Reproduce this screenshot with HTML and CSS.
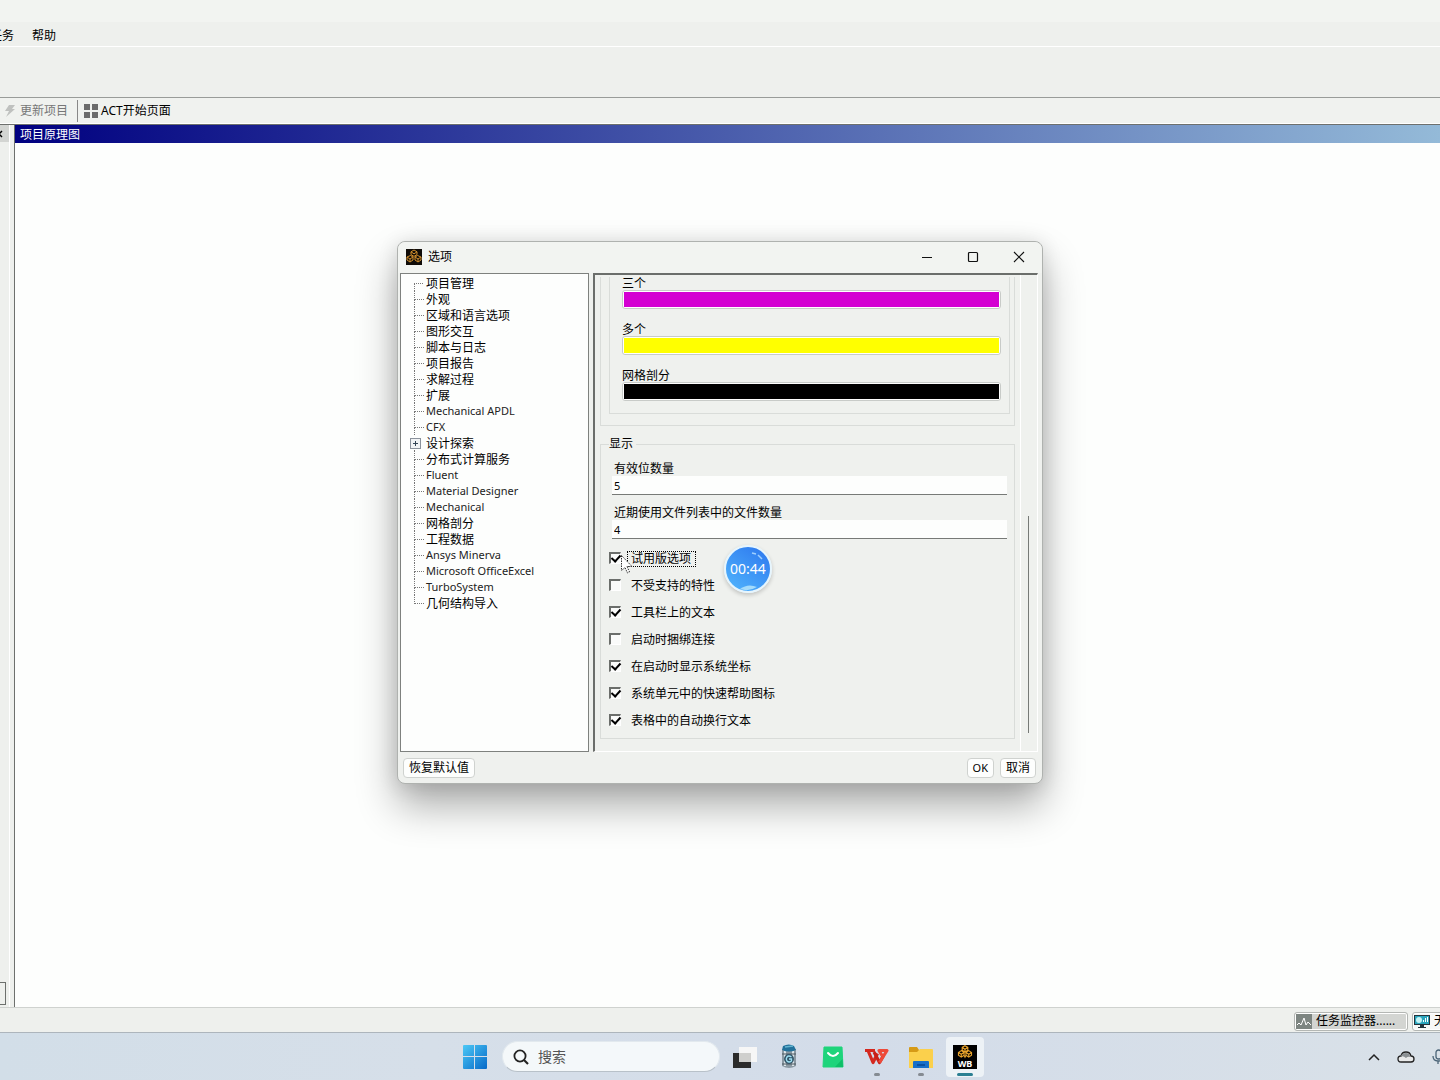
FILE: index.html
```html
<!DOCTYPE html>
<html lang="zh-CN">
<head>
<meta charset="utf-8">
<title>选项</title>
<link rel="stylesheet" href="styles.css">
</head>
<body>
<div class="screen">
  <div class="titlestrip"></div>
  <nav class="menubar"><a href="#" class="menu-cut">任务</a><a href="#">帮助</a></nav>
  <div class="toolbar-empty"></div>
  <div class="toolbar">
    <button class="tool tool-off" disabled>
      <svg width="12" height="14" viewBox="0 0 12 14"><path d="M5 1h6L8 5h3L2 13l3-6H1z" fill="#bfc1bf"/></svg>更新项目
    </button>
    <button class="tool">
      <svg width="14" height="14" viewBox="0 0 14 14" fill="#6b6b6b"><path d="M0 0h6v6H0zM8 0h6v6H8zM0 8h6v6H0zM8 8h6v6H8z"/></svg>ACT开始页面
    </button>
  </div>
  <main class="work">
    <aside class="side">
      <div class="side-head"><svg width="4" height="8" viewBox="0 0 4 8"><path d="M-4 1l6 6M2 1l-6 6" stroke="#000" stroke-width="1.5"/></svg></div>
      <div class="side-box"></div>
    </aside>
    <section class="schematic"><h1>项目原理图</h1></section>
  </main>
  <footer class="status">
    <button class="status-btn">
      <svg width="16" height="15" viewBox="0 0 16 15"><path d="M0 0h16v15H0z" fill="#7d8581"/><path d="M1 11l2-2 2 2 3-7 2 7 2-3 3 3" fill="none" stroke="#fff"/></svg>任务监控器......
    </button>
    <button class="status-btn status-cut">
      <svg width="16" height="15" viewBox="0 0 16 15"><path d="M0 1h16v10H0z" fill="#24343c"/><path d="M1 2h14v8H1z" fill="#2aa5bd"/><circle cx="5" cy="6" r="3" fill="#c5f3f5"/><path d="M9 8V6h1v2zm2 0V4h1v4zm2 0V3h1v5z" fill="#fff"/><path d="M6 11h4v2h2v1H4v-1h2z" fill="#24343c"/></svg>无
    </button>
  </footer>
  <div class="taskbar">
    <div></div>
    <div class="apps">
      <button class="app" aria-label="开始"><svg width="24" height="24" viewBox="0 0 24 24"><defs><linearGradient id="win" x1="0" y1="0" x2="1" y2="1"><stop offset="0" stop-color="#4cc8f6"/><stop offset="1" stop-color="#0669c8"/></linearGradient></defs><path d="M0 1q0-1 1-1h10v11H0zM12 0h11q1 0 1 1v10H12zM0 12h11v12H1q-1 0-1-1zM12 12h12v11q0 1-1 1H12z" fill="url(#win)"/></svg></button>
      <label class="search"><svg width="16" height="16" viewBox="0 0 16 16" fill="none" stroke="#222" stroke-width="1.8"><circle cx="7" cy="7" r="5.6"/><path d="M11 11l4 4" stroke-width="2.2"/></svg><input type="text" placeholder="搜索" aria-label="搜索"></label>
      <button class="app" aria-label="任务视图"><svg width="26" height="24" viewBox="0 0 26 24"><path d="M1 8h18v15H1z" fill="#2b2b2b"/><path d="M7 2h18v15H7z" fill="#f6f6f6"/><path d="M7 8h12v9H7z" fill="#cfcfcd"/></svg></button>
      <button class="app" aria-label="清理"><svg width="18" height="26" viewBox="0 0 18 26"><path d="M2 5h14v17q-7 4-14 0z" fill="#8b99a3"/><path d="M4 7h2v15H4zM12 7h2v15h-2z" fill="#dde5e9"/><path d="M2 10h14M2 20h14" stroke="#4c5961"/><path d="M3 2q6-3 11 0l2 4q-7 3-14 0z" fill="#22719b"/><path d="M5 3l8-1" stroke="#65b5d1" stroke-width="1.5"/><circle cx="9" cy="15" r="5" fill="#34566a"/><path d="M11.500 13q-3-2-4.500 0t0 4q2 2 4.500 0v-2H9" fill="none" stroke="#9de0f3" stroke-width="1.3"/></svg></button>
      <button class="app" aria-label="应用商店"><svg width="22" height="22" viewBox="0 0 22 22"><path d="M2 1h18l1 20H1z" fill="#1ed47b" stroke="#1ed47b" stroke-linejoin="round"/><path d="M13 21h8l-.5-8z" fill="#0fbf68"/><path d="M6 7q5 6 10 0" fill="none" stroke="#fff" stroke-width="2" stroke-linecap="round"/></svg></button>
      <button class="app running" aria-label="WPS"><svg width="24" height="18" viewBox="0 0 24 18" fill="none" stroke-width="3.200" stroke-linejoin="round"><path d="M0 2.500h10M3 2.500l5 12 4.500-9" stroke="#d4281f"/><path d="M9 4l5.500 10.500 4-7" stroke="#c81f18"/><path d="M14.500 14.500l7.500-12h-8l3 5" stroke="#ee4a39"/></svg></button>
      <button class="app running" aria-label="文件资源管理器"><svg width="24" height="22" viewBox="0 0 24 22"><path d="M0 2q0-1 1-1h7l2 3h13q1 0 1 1v17H0z" fill="#d69a16"/><path d="M0 6h8l3-3h12q1 0 1 1v18H0z" fill="#fbd04c"/><path d="M4 22v-6q0-1 1-1h14q1 0 1 1v6z" fill="#176fca"/><path d="M8 19h8" stroke="#0a50a1" stroke-width="2"/></svg></button>
      <button class="app active" aria-label="Workbench">
        <span class="wb"><svg width="16" height="14" viewBox="0 0 16 15" fill="none" stroke="#e8a32b" stroke-width="1.200"><path d="M8 .8l3 1.800v3L8 7.400 5 5.600v-3zM4 6l3 2v3l-3 2-3-2V8zM12 6l3 2v3l-3 2-3-2V8zM5 2.600l3 2 3-2M1 8l3 2 3-2M9 8l3 2 3-2M8 4v4M4 10v3M12 10v3M7 11l1 2 1-2"/></svg><b>WB</b></span>
      </button>
    </div>
    <div class="tray">
      <button class="tray-btn" aria-label="显示隐藏的图标"><svg width="12" height="8" viewBox="0 0 12 8"><path d="M1 7l5-5 5 5" fill="none" stroke="#222" stroke-width="1.500"/></svg></button>
      <button class="tray-btn" aria-label="OneDrive"><svg width="18" height="12" viewBox="0 0 18 12"><path d="M4 11q-3 0-3-3t3-3q1-4 5-4t5 4q3 0 3 3t-3 3z" fill="#e9eaea" stroke="#222" stroke-width="1.300"/><path d="M4 5q1-3 5-3t4 4q-2-1-4 1Q6 4 3 6z" fill="#8b9093"/></svg></button>
      <button class="tray-btn" aria-label="麦克风"><svg width="12" height="16" viewBox="0 0 12 16" fill="none" stroke="#4b6477" stroke-width="1.300"><rect x="4" y="1" width="5" height="9" rx="2.500"/><path d="M1 7q0 5 5 5t5-5M6 12v3"/></svg></button>
    </div>
  </div>

  <div class="dialog" role="dialog" aria-label="选项">
    <header class="dlg-head">
      <span class="logo"><svg width="16" height="15" viewBox="0 0 16 15" fill="none" stroke="#d08e2c" stroke-width="1"><path d="M8 1l3 1.800v2.800L8 7.400 5 5.600V2.800zM4.500 6.500L7 8v3l-3 2-3-2V8zM11.500 6.500L15 8v3l-3 2-3-2V8zM5 2.800l3 2 3-2M1 8l3 2 3-2M9 8l3 2 3-2M4 10v3M12 10v3"/></svg></span>
      <h2>选项</h2>
      <div class="winbtns">
        <button aria-label="最小化"><svg width="12" height="12" viewBox="0 0 12 12"><path d="M1 6.500h10" stroke="#111"/></svg></button>
        <button aria-label="最大化"><svg width="12" height="12" viewBox="0 0 12 12"><rect x="1.500" y="1.500" width="9" height="9" rx="1" fill="none" stroke="#111" stroke-width="1.200"/></svg></button>
        <button aria-label="关闭"><svg width="12" height="12" viewBox="0 0 12 12"><path d="M1 1l10 10M11 1L1 11" stroke="#111" stroke-width="1.100"/></svg></button>
      </div>
    </header>
    <div class="dlg-body">
      <ul class="tree">
        <li>项目管理</li><li>外观</li><li>区域和语言选项</li><li>图形交互</li><li>脚本与日志</li><li>项目报告</li><li>求解过程</li><li>扩展</li>
        <li class="en">Mechanical APDL</li><li class="en">CFX</li>
        <li class="branch">设计探索</li><li>分布式计算服务</li>
        <li class="en">Fluent</li><li class="en">Material Designer</li><li class="en">Mechanical</li>
        <li>网格剖分</li><li>工程数据</li>
        <li class="en">Ansys Minerva</li><li class="en">Microsoft OfficeExcel</li><li class="en">TurboSystem</li>
        <li>几何结构导入</li>
      </ul>
      <div class="panel">
        <div class="pane">
          <div class="outer"><div class="inner">
            <div class="swatch-row"><span id="c3">三个</span><button class="swatch" aria-labelledby="c3"><i class="magenta"></i></button></div>
            <div class="swatch-row"><span id="cm">多个</span><button class="swatch" aria-labelledby="cm"><i class="yellow"></i></button></div>
            <div class="swatch-row"><span id="cg">网格剖分</span><button class="swatch" aria-labelledby="cg"><i class="black"></i></button></div>
          </div></div>
          <fieldset class="display">
            <legend>显示</legend>
            <div class="field"><label for="digits">有效位数量</label><input id="digits" type="text" value="5"></div>
            <div class="field"><label for="recent">近期使用文件列表中的文件数量</label><input id="recent" type="text" value="4"></div>
            <div class="checks">
              <label><input type="checkbox" checked><span class="focus">试用版选项</span></label>
              <label><input type="checkbox"><span>不受支持的特性</span></label>
              <label><input type="checkbox" checked><span>工具栏上的文本</span></label>
              <label><input type="checkbox"><span>启动时捆绑连接</span></label>
              <label><input type="checkbox" checked><span>在启动时显示系统坐标</span></label>
              <label><input type="checkbox" checked><span>系统单元中的快速帮助图标</span></label>
              <label><input type="checkbox" checked><span>表格中的自动换行文本</span></label>
            </div>
          </fieldset>
        </div>
        <div class="scroll"><div class="thumb"></div></div>
      </div>
    </div>
    <footer class="dlg-foot">
      <button class="btn">恢复默认值</button>
      <button class="btn btn-ok">OK</button>
      <button class="btn">取消</button>
    </footer>
    <div class="timer">
      <svg class="shine" width="44" height="44" viewBox="0 0 44 44" fill="none"><path d="M14 42q8-6 17-2-8 5-17 2z" fill="#a5dcfb"/><path d="M26 6l4 1M32 8l4 4" stroke="#9fd0ff" stroke-width="1.500"/></svg>
      <span>00:44</span>
    </div>
    <svg class="cursor" width="12" height="19" viewBox="0 0 12 19"><path d="M.5.5v15l3.500-3 2.500 5.500 2-1L6 11.500h5z" fill="#fff" stroke="#333" stroke-dasharray="1.500 1"/></svg>
  </div>
</div>
</body>
</html>
```
FILE: styles.css
```css
* { box-sizing: border-box; }
body { margin: 0; background: #fdfefd; color: #000; font: 12px/16px "Noto Sans", "Noto Sans CJK SC", sans-serif; }
button, input { font: inherit; color: inherit; }
button { border: 0; padding: 0; background: none; }
h1, h2, ul { margin: 0; padding: 0; font: inherit; }
svg { display: block; flex: none; overflow: visible; }

.screen { position: relative; display: flex; flex-direction: column; min-height: 100vh; overflow: hidden; }
.titlestrip { height: 22px; background: #f2f4f1; }
.menubar { display: flex; gap: 18px; height: 25px; padding-top: 6px; background: #eef0ed; border-bottom: 1px solid #fff; }
.menubar a { color: #000; text-decoration: none; }
.menu-cut { margin-left: -10px; }
.toolbar-empty { height: 50px; background: #eef0ed; }
.toolbar { display: flex; align-items: center; height: 27px; background: #f0f2ef; border-top: 1px solid #999c99; border-bottom: 1px solid #fff; }
.tool { display: flex; align-items: center; gap: 4px; height: 22px; padding: 0 9px 0 4px; }
.tool + .tool { gap: 3px; padding-left: 6px; border-left: 1px solid #888; }
.tool-off { color: #777; }

.work { display: flex; flex: 1; border-top: 1px solid #6d706d; }
.side { display: flex; flex-direction: column; justify-content: space-between; width: 14px; padding-bottom: 2px; background: linear-gradient(90deg, #eef0ed 9px, #fff 9px 10px, #eef0ed 10px); }
.side-head { width: 9px; height: 17px; padding-top: 5px; background: #d3d5d2; overflow: hidden; }
.side-box { width: 6px; height: 23px; border: 1px solid #6d706d; border-left: 0; }
.schematic { flex: 1; border-left: 1px solid #6d706d; background: #fdfefd; }
.schematic h1 { height: 18px; padding-left: 5px; line-height: 20px; color: #fff; background: linear-gradient(90deg, #000080, #94bad8); }

.status { display: flex; justify-content: flex-end; align-items: center; gap: 4px; height: 25px; padding-top: 2px; background: #eef0ed; border-top: 1px solid #cfd2cf; overflow: hidden; }
.status-btn { display: flex; align-items: center; flex: none; gap: 4px; width: 114px; height: 19px; padding: 0 1px; background: #d3d5d2; border: 1px solid #b4b7b4; border-radius: 3px; box-shadow: inset 0 0 0 1px #fff; white-space: nowrap; }
.status-cut { width: 64px; margin-right: -36px; background: #f7f8f7; }

.taskbar { display: grid; grid-template-columns: 1fr auto 1fr; align-items: center; height: 48px; border-top: 1px solid #adb5bc; background: linear-gradient(90deg, #d2dee8, #d6dfe9 30%, #d3dce9 60%, #d9e1e8); overflow: hidden; }
.apps { display: flex; align-items: center; }
.app { position: relative; display: flex; align-items: center; justify-content: center; width: 44px; height: 40px; }
.search { display: flex; align-items: center; gap: 9px; width: 218px; height: 31px; margin: 0 3px 0 5px; padding: 0 10px; border-radius: 16px; background: #f4f8fa; border: 1px solid #e2e9ee; border-bottom-color: #b8c1c9; }
.search input { flex: 1; min-width: 0; border: 0; padding: 0; outline: 0; background: none; font-size: 14px; line-height: 20px; }
.search input::placeholder { color: #555; opacity: 1; }
.running::after, .active::after { content: ""; position: absolute; left: 19px; bottom: 1px; width: 6px; height: 3px; border-radius: 2px; background: #858b92; }
.active { width: 38px; margin: 0 3px; border-radius: 4px; background: #edf2f6; }
.active::after { left: 11px; width: 16px; background: #2b7f92; }
.wb { display: flex; flex-direction: column; align-items: center; width: 24px; height: 24px; background: #000; color: #fff; }
.wb b { font-size: 9px; line-height: 10px; }
.tray { display: flex; justify-content: flex-end; margin-right: -14px; }
.tray-btn { display: flex; align-items: center; justify-content: center; width: 32px; height: 32px; }

.dialog { position: absolute; top: 241px; left: calc(50% - 323px); display: flex; flex-direction: column; width: 646px; background: #eff1ee; border: 1px solid #afb2af; border-radius: 8px; box-shadow: 0 22px 40px rgba(0, 0, 0, .32), 0 2px 20px rgba(0, 0, 0, .12); }
.dlg-head { display: flex; align-items: center; height: 31px; padding: 0 0 2px 8px; border-radius: 8px 8px 0 0; background: #f2f4f1; }
.logo { display: flex; width: 16px; height: 16px; margin-right: 6px; background: #100c08; }
.winbtns { display: flex; margin-left: auto; }
.winbtns button { display: flex; align-items: center; justify-content: center; width: 46px; height: 28px; }
.dlg-body { display: flex; gap: 4px; padding: 0 4px 0 2px; }
.tree { width: 189px; padding: 1px 0 0 13px; list-style: none; background: #fdfefd; border: 1px solid #7e817e; }
.tree li { position: relative; padding-left: 12px; line-height: 18px; height: 16px; white-space: nowrap; }
.tree .en { color: #222; line-height: 16px; }
.tree .en, .btn-ok { font-size: 11px; }
.tree li::before { content: ""; position: absolute; left: 0; top: 0; width: 9px; height: 8px; border-left: 1px dotted #777; border-bottom: 1px dotted #777; }
.tree li:not(:last-child)::after { content: ""; position: absolute; left: 0; top: 8px; height: 8px; border-left: 1px dotted #777; }
.tree li:first-child::before { border-left: 0; }
.tree .branch::before { z-index: 1; left: -4px; top: 3px; width: 9px; height: 9px; border: 1px solid #8b929c; background: linear-gradient(#345, #345) center / 5px 1px no-repeat, linear-gradient(#345, #345) center / 1px 5px no-repeat, #f1f3f5; }
.tree .branch::after { top: 0; height: 16px; }

.panel { display: flex; flex: 1; border: 1px solid #fff; border-top: 2px solid #6b6e6b; border-left: 2px solid #6b6e6b; }
.pane { flex: 1; padding: 2px 5px 12px; border-right: 1px solid #fff; }
.outer { padding: 0 4px 11px 8px; border: 1px solid #d9dcd9; border-top: 0; }
.inner { display: flex; flex-direction: column; gap: 14px; padding: 0 8px 12px 12px; border: 1px solid #d9dcd9; border-top: 0; }
.swatch-row { display: flex; flex-direction: column; line-height: 13px; }
.swatch { display: flex; height: 19px; padding: 1px; background: #fff; border: 1px solid #c8cbc8; border-radius: 3px; }
.swatch i { flex: 1; height: 15px; }
.magenta { background: #d400d2; }
.yellow { background: #ffff00; }
.black { background: #000; }
.display { min-width: 0; margin: 10px 0 0; padding: 10px 7px 4px 8px; border: 1px solid #d9dcd9; }
.display legend { padding: 0 3px 0 0; }
.field { display: flex; flex-direction: column; margin: 0 0 11px 3px; }
.field label { padding-left: 2px; line-height: 14px; }
.field input { height: 19px; padding: 0 2px; border: 0; border-bottom: 1px solid #777a77; border-radius: 0; outline: 0; background: #fdfefd; font-size: 11px; }
.checks { display: flex; flex-direction: column; margin-top: -5px; }
.checks label { display: flex; align-items: center; gap: 6px; height: 27px; }
.checks span { padding: 0 4px 0 3px; border: 1px dotted transparent; line-height: 14px; }
.checks .focus { border-color: #000; }
.checks input { position: relative; appearance: none; width: 12px; height: 12px; margin: 0 0 2px; background: #fafbfa; border: 1px solid #fff; border-top: 2px solid #6b6e6b; border-left: 2px solid #6b6e6b; }
.checks input:checked::after { content: ""; position: absolute; left: 2px; top: -1px; width: 4px; height: 7px; border: solid #000; border-width: 0 2px 2px 0; transform: rotate(42deg); }
.scroll { display: flex; align-items: flex-end; width: 16px; padding: 0 0 18px 7px; }
.thumb { width: 1px; height: 217px; background: #777a77; }
.dlg-foot { display: flex; gap: 6px; height: 31px; padding: 6px 6px 5px 5px; }
.btn { display: flex; align-items: center; justify-content: center; padding: 0 5px; height: 20px; background: #fdfefd; border: 1px solid #cfd2cf; border-radius: 4px; }
.btn-ok { margin-left: auto; }
.timer { position: absolute; left: 326px; top: 303px; width: 48px; height: 48px; border: 2px solid #e6f5fd; border-radius: 50%; background: linear-gradient(215deg, #2c76ee, #51b6fd); box-shadow: 0 2px 4px rgba(0, 0, 0, .2); color: #fff; font-size: 14px; line-height: 44px; text-align: center; }
.timer span { position: relative; }
.shine { position: absolute; left: 0; top: 0; }
.cursor { position: absolute; left: 223px; top: 313px; }
```
